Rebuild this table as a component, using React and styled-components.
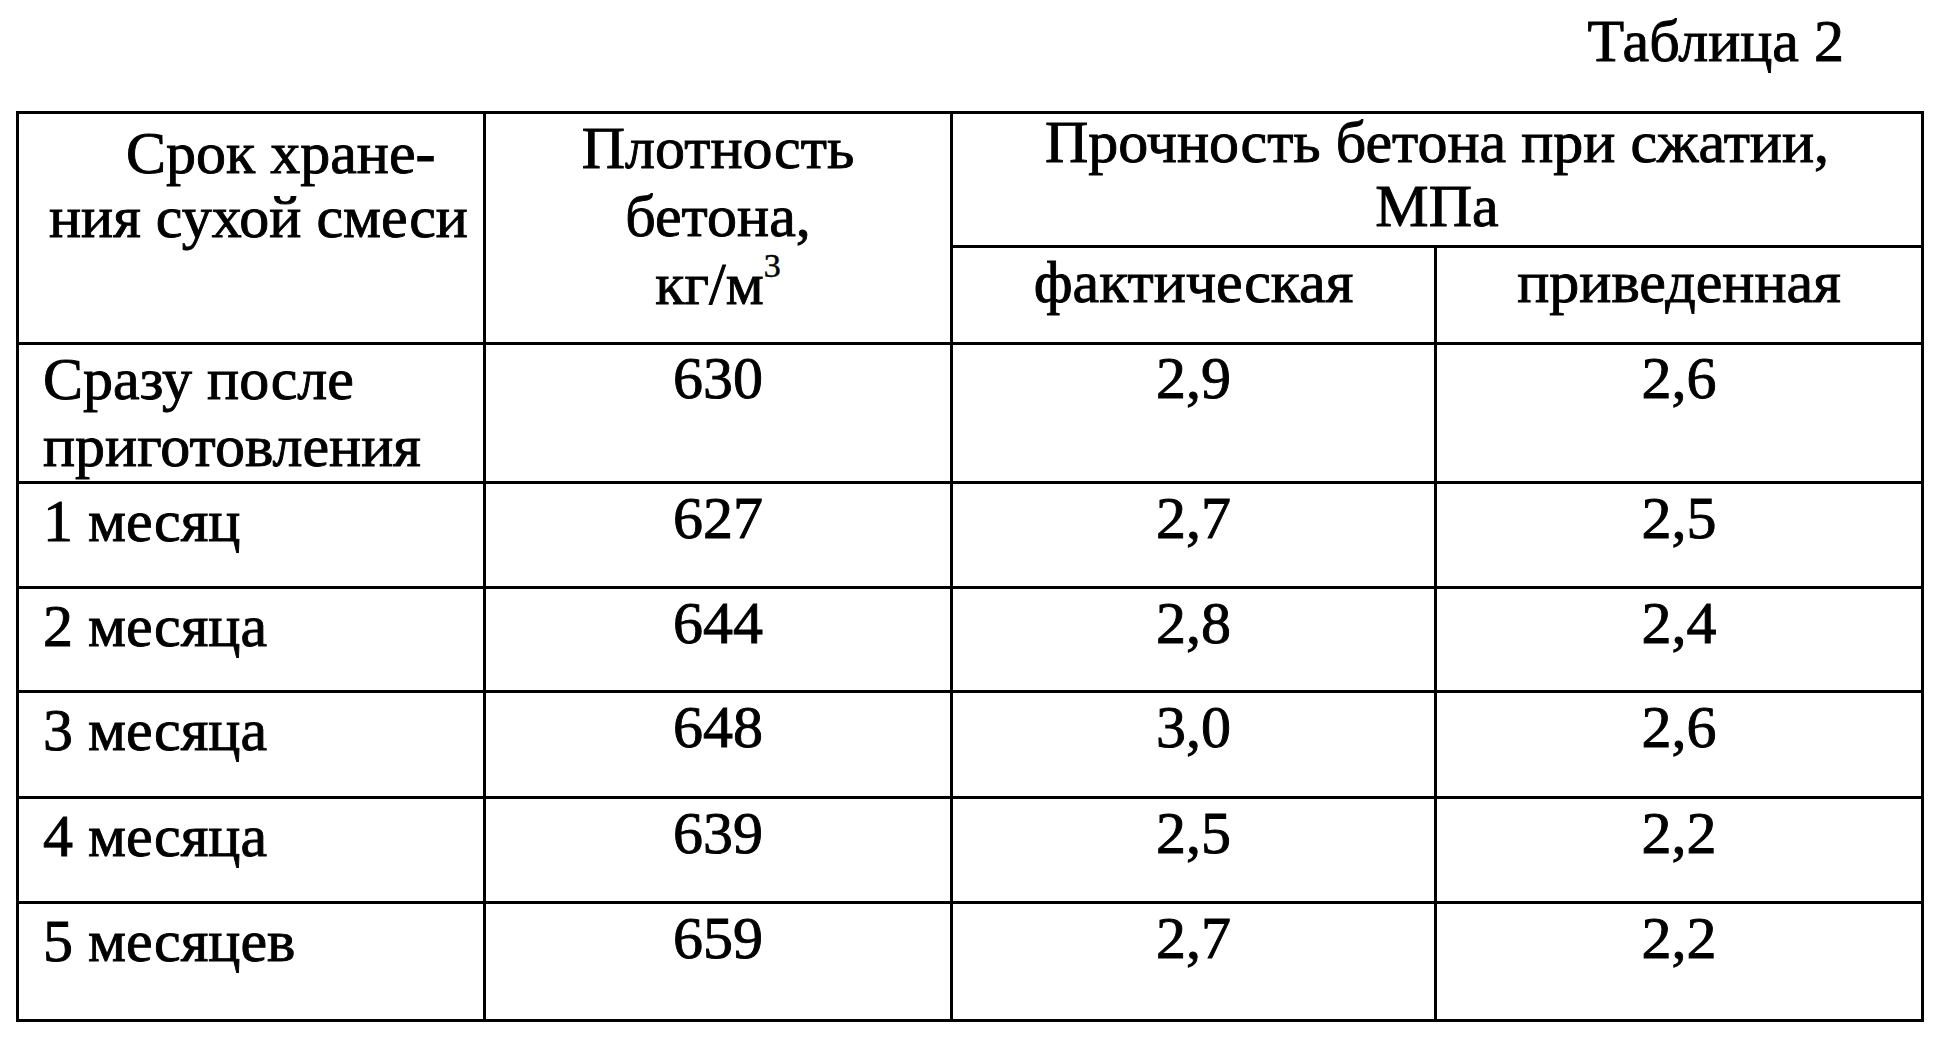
import React from 'react'
import styled, { createGlobalStyle } from "styled-components";

const GlobalStyle = createGlobalStyle`
    html, body {
        margin: 0;
        padding: 0;
        background: #fff;
    }
    body {
        font-family: "Liberation Serif", "Times New Roman", serif;
        color: #000;
    }
`;

const rows = [
    { label: ["Сразу после", "приготовления"], density: "630", actual: "2,9", reduced: "2,6", h: 139, labelPad: 1, labelLh: 67, valuePad: 5 },
    { label: ["1 месяц"], density: "627", actual: "2,7", reduced: "2,5", h: 105 },
    { label: ["2 месяца"], density: "644", actual: "2,8", reduced: "2,4", h: 104 },
    { label: ["3 месяца"], density: "648", actual: "3,0", reduced: "2,6", h: 106 },
    { label: ["4 месяца"], density: "639", actual: "2,5", reduced: "2,2", h: 105 },
    { label: ["5 месяцев"], density: "659", actual: "2,7", reduced: "2,2", h: 118 },
];

const App = () => {
    return (
        <>
            <GlobalStyle />
            <Page>
                <Caption>Таблица 2</Caption>
                <Table>
                    <colgroup>
                        <col style={{ width: 467 }} />
                        <col style={{ width: 467 }} />
                        <col style={{ width: 484 }} />
                        <col style={{ width: 487 }} />
                    </colgroup>
                    <thead>
                        <Row $h={134}>
                            <HeadCell rowSpan={2} $align="left" $pad={7}>
                                <Line $lh={64} $indent={77}>Срок хране-</Line>
                                <Line $lh={64}>ния сухой смеси</Line>
                            </HeadCell>
                            <HeadCell rowSpan={2} $pad={0}>
                                <Line $lh={68}>Плотность</Line>
                                <Line $lh={68}>бетона,</Line>
                                <Line $lh={68}>кг/м<Sup>3</Sup></Line>
                            </HeadCell>
                            <HeadCell colSpan={2} $pad={0}>
                                <Line $lh={56}>Прочность бетона при сжатии,</Line>
                                <Line $lh={72}>МПа</Line>
                            </HeadCell>
                        </Row>
                        <Row $h={97}>
                            <HeadCell $pad={5}>
                                <Line $lh={58}>фактическая</Line>
                            </HeadCell>
                            <HeadCell $pad={5}>
                                <Line $lh={58}>приведенная</Line>
                            </HeadCell>
                        </Row>
                    </thead>
                    <tbody>
                        {rows.map((r) => (
                            <Row key={r.density} $h={r.h}>
                                <Cell $align="left" $pad={r.labelPad ?? 9}>
                                    {r.label.map((l) => (
                                        <Line key={l} $lh={r.labelLh ?? 56}>{l}</Line>
                                    ))}
                                </Cell>
                                <Cell $pad={r.valuePad ?? 6}>
                                    <Line $lh={56}>{r.density}</Line>
                                </Cell>
                                <Cell $pad={r.valuePad ?? 6}>
                                    <Line $lh={56}>{r.actual}</Line>
                                </Cell>
                                <Cell $pad={r.valuePad ?? 6}>
                                    <Line $lh={56}>{r.reduced}</Line>
                                </Cell>
                            </Row>
                        ))}
                    </tbody>
                </Table>
            </Page>
        </>
    );
}

export default App

const Page = styled.div`
    width: 1937px;
    height: 1043px;
    display: flex;
    flex-direction: column;
    padding-left: 16px;
    box-sizing: border-box;
    overflow: hidden;
`;
const Caption = styled.div`
    box-sizing: border-box;
    font-size: 60px;
    line-height: 66px;
    padding-top: 8px;
    margin-bottom: 37px;
    padding-right: 77px;
    text-align: right;
    width: 1905px;
    -webkit-text-stroke: 0.9px #000;
`;
const Table = styled.table`
    border-collapse: collapse;
    table-layout: fixed;
    width: 1905px;
    font-size: 60px;
    -webkit-text-stroke: 0.9px #000;
`;
const Row = styled.tr`
    height: ${(p) => p.$h}px;
`;
const HeadCell = styled.th`
    border: 3px solid #000;
    font-weight: normal;
    vertical-align: top;
    text-align: ${(p) => p.$align || "center"};
    padding: ${(p) => p.$pad}px 0 0 ${(p) => (p.$align === "left" ? 30 : 0)}px;
    white-space: nowrap;
`;
const Cell = styled.td`
    border: 3px solid #000;
    vertical-align: top;
    text-align: ${(p) => p.$align || "center"};
    padding: ${(p) => p.$pad}px 0 0 ${(p) => (p.$align === "left" ? 24 : 0)}px;
    white-space: nowrap;
`;
const Line = styled.div`
    line-height: ${(p) => p.$lh}px;
    text-indent: ${(p) => p.$indent || 0}px;
`;
const Sup = styled.span`
    font-size: 34px;
    line-height: 0;
    vertical-align: 27px;
    -webkit-text-stroke: 0.5px #000;
`;
